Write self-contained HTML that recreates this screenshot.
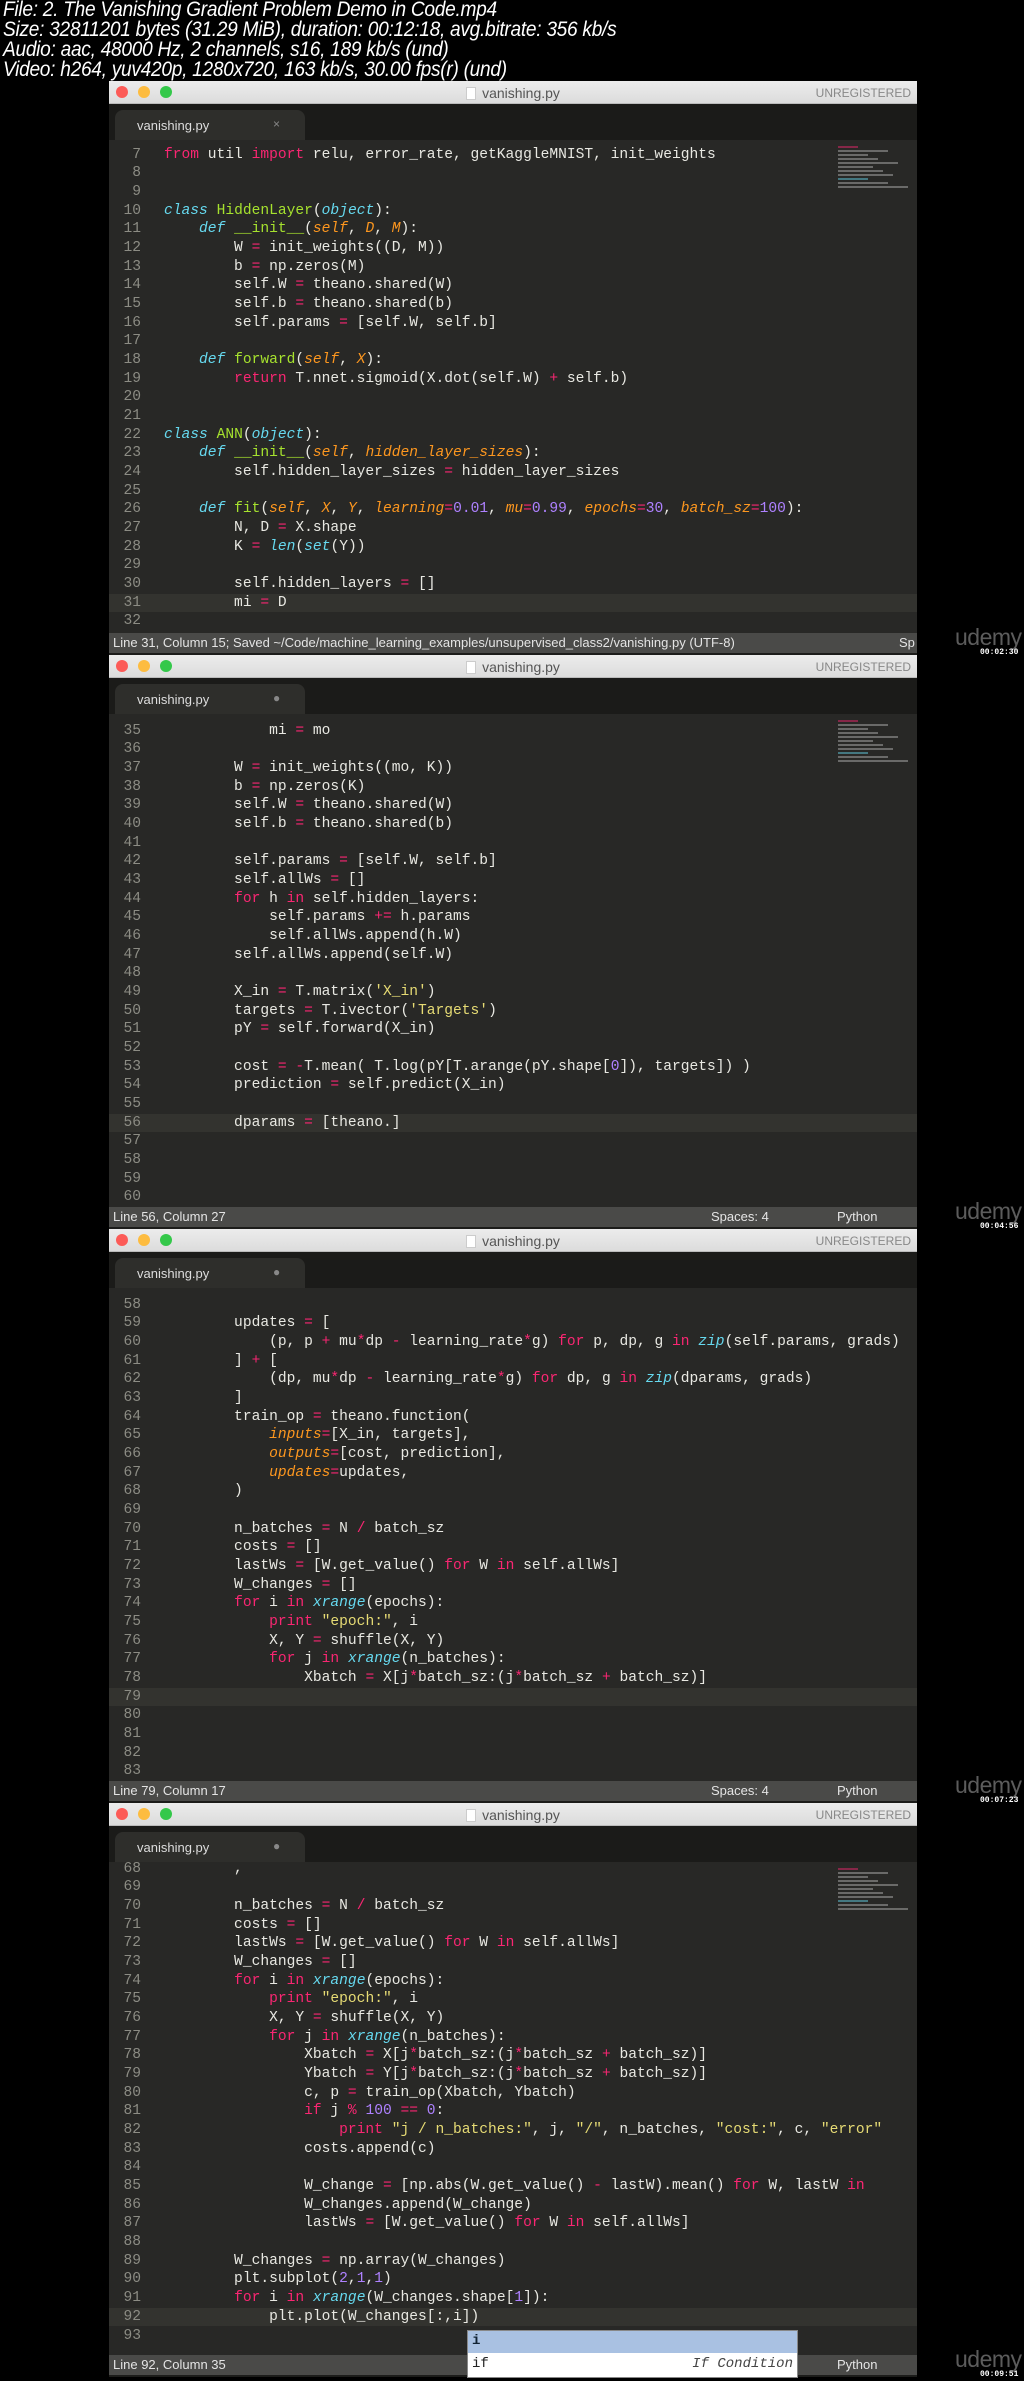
<!DOCTYPE html>
<html><head><meta charset="utf-8">
<style>
*{margin:0;padding:0;box-sizing:border-box}
body{width:1024px;height:2381px;background:#000;position:relative;overflow:hidden;font-family:"Liberation Sans",sans-serif}
.hdr{position:absolute;left:3px;top:0;color:#fff;font-family:"Liberation Sans Narrow","Liberation Sans",sans-serif;font-style:italic;font-size:21px;line-height:20px;letter-spacing:-0.3px;transform:scaleX(0.91);transform-origin:0 0;white-space:nowrap}
.win{position:absolute;left:109px;width:808px;height:574px;overflow:hidden;background:#1c1c1a}
.tb{position:absolute;left:0;top:0;width:808px;height:23px;background:linear-gradient(#ececec,#dcdcdc);border-bottom:1px solid #bbb}
.dot{position:absolute;top:5px;width:12px;height:12px;border-radius:50%}
.r{left:7px;background:#fc5b57}.y{left:29px;background:#fdbc40}.g{left:51px;background:#34c84a}
.ttl{position:absolute;left:0;width:808px;top:4px;text-align:center;font-size:14px;color:#555}
.ttl i{display:inline-block;width:10px;height:13px;background:#fff;border:1px solid #ccc;margin-right:6px;vertical-align:-2px}
.unreg{position:absolute;right:6px;top:5px;font-size:12px;color:#888}
.tabs{position:absolute;top:23px;left:0;width:808px;height:36px;background:#1b1b19}
.tab{position:absolute;left:6px;top:6px;width:190px;height:30px;background:#2e2e2b;border-radius:8px 8px 0 0;color:#ddd;font-size:13px;padding:8px 0 0 22px}
.tab span{position:absolute;left:158px;top:7px;color:#888;font-size:12px}
.ed{position:absolute;top:59px;left:0;width:808px;height:493px;background:#282826;overflow:hidden}
.hl{position:absolute;left:0;width:808px;height:18.67px;background:#33332f}
.gut{position:absolute;left:0;width:32px;text-align:right;color:#8c8c84;font-family:"Liberation Mono",monospace;font-size:14.6px;line-height:18.67px;white-space:pre}
.code{position:absolute;left:55px;color:#e8e8e2;font-family:"Liberation Mono",monospace;font-size:14.6px;line-height:18.67px;white-space:pre}
.mm{position:absolute;left:729px;top:6px;width:77px;height:150px;opacity:.45}
.mm div{height:2px;margin-bottom:2px;background:#bbb}
.st{position:absolute;top:552px;left:0;width:808px;height:20px;background:#4a4a48;color:#e4e4e4;font-size:13px;line-height:20px;padding-left:4px}
.st .a{position:absolute;left:602px}.st .b{position:absolute;left:728px}
.k{color:#f92672}.d{color:#66d9ef;font-style:italic}.f{color:#a6e22e}.p{color:#fd971f;font-style:italic}.n{color:#ae81ff}.s{color:#e6db74}
.ud{position:absolute;left:955px;color:#5c5c5c;font-size:23px;letter-spacing:-0.5px}
.ts{position:absolute;left:980px;color:#fff;font-size:8px;font-weight:bold;font-family:"Liberation Mono",monospace}
.pop{position:absolute;left:467px;top:2330px;width:331px;height:48px;background:#fff;border:1px solid #888;font-family:"Liberation Mono",monospace;font-size:14px}
.pop .r1{height:22px;background:#a9c1e2;padding:2px 4px;font-weight:bold;color:#123}
.pop .r2{height:24px;padding:3px 4px;color:#222}
.pop .r2 em{float:right;color:#444}
</style></head><body>
<div class="hdr">File: 2. The Vanishing Gradient Problem Demo in Code.mp4<br>Size: 32811201 bytes (31.29 MiB), duration: 00:12:18, avg.bitrate: 356 kb/s<br>Audio: aac, 48000 Hz, 2 channels, s16, 189 kb/s (und)<br>Video: h264, yuv420p, 1280x720, 163 kb/s, 30.00 fps(r) (und)</div>

<!-- Frame 1 -->
<div class="win" style="top:81px">
<div class="tb"><div class="dot r"></div><div class="dot y"></div><div class="dot g"></div><div class="ttl"><i></i>vanishing.py</div><div class="unreg">UNREGISTERED</div></div>
<div class="tabs"><div class="tab">vanishing.py<span>×</span></div></div>
<div class="ed">
<div class="hl" style="top:453.7px"></div>
<div class="mm"><div style="width:20px;background:#f92672"></div><div style="width:50px"></div><div style="width:30px"></div><div style="width:40px"></div><div style="width:60px"></div><div style="width:35px"></div><div style="width:45px"></div><div style="width:55px"></div><div style="width:30px;background:#66d9ef"></div><div style="width:50px"></div><div style="width:70px"></div></div>
<div class="gut" style="top:5.7px">7
8
9
10
11
12
13
14
15
16
17
18
19
20
21
22
23
24
25
26
27
28
29
30
31
32</div>
<div class="code" style="top:5.7px"><span class="k">from</span> util <span class="k">import</span> relu, error_rate, getKaggleMNIST, init_weights


<span class="d">class</span> <span class="f">HiddenLayer</span>(<span class="d">object</span>):
    <span class="d">def</span> <span class="f">__init__</span>(<span class="p">self</span>, <span class="p">D</span>, <span class="p">M</span>):
        W <span class="k">=</span> init_weights((D, M))
        b <span class="k">=</span> np.zeros(M)
        self.W <span class="k">=</span> theano.shared(W)
        self.b <span class="k">=</span> theano.shared(b)
        self.params <span class="k">=</span> [self.W, self.b]

    <span class="d">def</span> <span class="f">forward</span>(<span class="p">self</span>, <span class="p">X</span>):
        <span class="k">return</span> T.nnet.sigmoid(X.dot(self.W) <span class="k">+</span> self.b)


<span class="d">class</span> <span class="f">ANN</span>(<span class="d">object</span>):
    <span class="d">def</span> <span class="f">__init__</span>(<span class="p">self</span>, <span class="p">hidden_layer_sizes</span>):
        self.hidden_layer_sizes <span class="k">=</span> hidden_layer_sizes

    <span class="d">def</span> <span class="f">fit</span>(<span class="p">self</span>, <span class="p">X</span>, <span class="p">Y</span>, <span class="p">learning</span><span class="k">=</span><span class="n">0.01</span>, <span class="p">mu</span><span class="k">=</span><span class="n">0.99</span>, <span class="p">epochs</span><span class="k">=</span><span class="n">30</span>, <span class="p">batch_sz</span><span class="k">=</span><span class="n">100</span>):
        N, D <span class="k">=</span> X.shape
        K <span class="k">=</span> <span class="d">len</span>(<span class="d">set</span>(Y))

        self.hidden_layers <span class="k">=</span> []
        mi <span class="k">=</span> D
</div></div>
<div class="st">Line 31, Column 15; Saved ~/Code/machine_learning_examples/unsupervised_class2/vanishing.py (UTF-8)<span style="position:absolute;left:790px">Sp</span></div>
</div>
<div class="ud" style="top:624px">udemy</div><div class="ts" style="top:648px">00:02:30</div>

<!-- Frame 2 -->
<div class="win" style="top:655px">
<div class="tb"><div class="dot r"></div><div class="dot y"></div><div class="dot g"></div><div class="ttl"><i></i>vanishing.py</div><div class="unreg">UNREGISTERED</div></div>
<div class="tabs"><div class="tab">vanishing.py<span>●</span></div></div>
<div class="ed">
<div class="hl" style="top:399.8px"></div>
<div class="mm"><div style="width:20px;background:#f92672"></div><div style="width:50px"></div><div style="width:30px"></div><div style="width:40px"></div><div style="width:60px"></div><div style="width:35px"></div><div style="width:45px"></div><div style="width:55px"></div><div style="width:30px;background:#66d9ef"></div><div style="width:50px"></div><div style="width:70px"></div></div>
<div class="gut" style="top:7.7px">35
36
37
38
39
40
41
42
43
44
45
46
47
48
49
50
51
52
53
54
55
56
57
58
59
60</div>
<div class="code" style="top:7.7px">            mi <span class="k">=</span> mo

        W <span class="k">=</span> init_weights((mo, K))
        b <span class="k">=</span> np.zeros(K)
        self.W <span class="k">=</span> theano.shared(W)
        self.b <span class="k">=</span> theano.shared(b)

        self.params <span class="k">=</span> [self.W, self.b]
        self.allWs <span class="k">=</span> []
        <span class="k">for</span> h <span class="k">in</span> self.hidden_layers:
            self.params <span class="k">+=</span> h.params
            self.allWs.append(h.W)
        self.allWs.append(self.W)

        X_in <span class="k">=</span> T.matrix(<span class="s">'X_in'</span>)
        targets <span class="k">=</span> T.ivector(<span class="s">'Targets'</span>)
        pY <span class="k">=</span> self.forward(X_in)

        cost <span class="k">=</span> <span class="k">-</span>T.mean( T.log(pY[T.arange(pY.shape[<span class="n">0</span>]), targets]) )
        prediction <span class="k">=</span> self.predict(X_in)

        dparams <span class="k">=</span> [theano.]
</div></div>
<div class="st">Line 56, Column 27<span class="a">Spaces: 4</span><span class="b">Python</span></div>
</div>
<div class="ud" style="top:1198px">udemy</div><div class="ts" style="top:1222px">00:04:56</div>

<!-- Frame 3 -->
<div class="win" style="top:1229px">
<div class="tb"><div class="dot r"></div><div class="dot y"></div><div class="dot g"></div><div class="ttl"><i></i>vanishing.py</div><div class="unreg">UNREGISTERED</div></div>
<div class="tabs"><div class="tab">vanishing.py<span>●</span></div></div>
<div class="ed">
<div class="hl" style="top:399.8px"></div>
<div class="gut" style="top:7.7px">58
59
60
61
62
63
64
65
66
67
68
69
70
71
72
73
74
75
76
77
78
79
80
81
82
83</div>
<div class="code" style="top:7.7px">
        updates <span class="k">=</span> [
            (p, p <span class="k">+</span> mu<span class="k">*</span>dp <span class="k">-</span> learning_rate<span class="k">*</span>g) <span class="k">for</span> p, dp, g <span class="k">in</span> <span class="d">zip</span>(self.params, grads)
        ] <span class="k">+</span> [
            (dp, mu<span class="k">*</span>dp <span class="k">-</span> learning_rate<span class="k">*</span>g) <span class="k">for</span> dp, g <span class="k">in</span> <span class="d">zip</span>(dparams, grads)
        ]
        train_op <span class="k">=</span> theano.function(
            <span class="p">inputs</span><span class="k">=</span>[X_in, targets],
            <span class="p">outputs</span><span class="k">=</span>[cost, prediction],
            <span class="p">updates</span><span class="k">=</span>updates,
        )

        n_batches <span class="k">=</span> N <span class="k">/</span> batch_sz
        costs <span class="k">=</span> []
        lastWs <span class="k">=</span> [W.get_value() <span class="k">for</span> W <span class="k">in</span> self.allWs]
        W_changes <span class="k">=</span> []
        <span class="k">for</span> i <span class="k">in</span> <span class="d">xrange</span>(epochs):
            <span class="k">print</span> <span class="s">"epoch:"</span>, i
            X, Y <span class="k">=</span> shuffle(X, Y)
            <span class="k">for</span> j <span class="k">in</span> <span class="d">xrange</span>(n_batches):
                Xbatch <span class="k">=</span> X[j<span class="k">*</span>batch_sz:(j<span class="k">*</span>batch_sz <span class="k">+</span> batch_sz)]
</div></div>
<div class="st">Line 79, Column 17<span class="a">Spaces: 4</span><span class="b">Python</span></div>
</div>
<div class="ud" style="top:1772px">udemy</div><div class="ts" style="top:1796px">00:07:23</div>

<!-- Frame 4 -->
<div class="win" style="top:1803px">
<div class="tb"><div class="dot r"></div><div class="dot y"></div><div class="dot g"></div><div class="ttl"><i></i>vanishing.py</div><div class="unreg">UNREGISTERED</div></div>
<div class="tabs"><div class="tab">vanishing.py<span>●</span></div></div>
<div class="ed">
<div class="hl" style="top:445.8px"></div>
<div class="mm"><div style="width:20px;background:#f92672"></div><div style="width:50px"></div><div style="width:30px"></div><div style="width:40px"></div><div style="width:60px"></div><div style="width:35px"></div><div style="width:45px"></div><div style="width:55px"></div><div style="width:30px;background:#66d9ef"></div><div style="width:50px"></div><div style="width:70px"></div></div>
<div class="gut" style="top:-2.3px">68
69
70
71
72
73
74
75
76
77
78
79
80
81
82
83
84
85
86
87
88
89
90
91
92
93</div>
<div class="code" style="top:-2.3px">        ,

        n_batches <span class="k">=</span> N <span class="k">/</span> batch_sz
        costs <span class="k">=</span> []
        lastWs <span class="k">=</span> [W.get_value() <span class="k">for</span> W <span class="k">in</span> self.allWs]
        W_changes <span class="k">=</span> []
        <span class="k">for</span> i <span class="k">in</span> <span class="d">xrange</span>(epochs):
            <span class="k">print</span> <span class="s">"epoch:"</span>, i
            X, Y <span class="k">=</span> shuffle(X, Y)
            <span class="k">for</span> j <span class="k">in</span> <span class="d">xrange</span>(n_batches):
                Xbatch <span class="k">=</span> X[j<span class="k">*</span>batch_sz:(j<span class="k">*</span>batch_sz <span class="k">+</span> batch_sz)]
                Ybatch <span class="k">=</span> Y[j<span class="k">*</span>batch_sz:(j<span class="k">*</span>batch_sz <span class="k">+</span> batch_sz)]
                c, p <span class="k">=</span> train_op(Xbatch, Ybatch)
                <span class="k">if</span> j <span class="k">%</span> <span class="n">100</span> <span class="k">==</span> <span class="n">0</span>:
                    <span class="k">print</span> <span class="s">"j / n_batches:"</span>, j, <span class="s">"/"</span>, n_batches, <span class="s">"cost:"</span>, c, <span class="s">"error"</span>
                costs.append(c)

                W_change <span class="k">=</span> [np.abs(W.get_value() <span class="k">-</span> lastW).mean() <span class="k">for</span> W, lastW <span class="k">in</span>
                W_changes.append(W_change)
                lastWs <span class="k">=</span> [W.get_value() <span class="k">for</span> W <span class="k">in</span> self.allWs]

        W_changes <span class="k">=</span> np.array(W_changes)
        plt.subplot(<span class="n">2</span>,<span class="n">1</span>,<span class="n">1</span>)
        <span class="k">for</span> i <span class="k">in</span> <span class="d">xrange</span>(W_changes.shape[<span class="n">1</span>]):
            plt.plot(W_changes[:,i])
</div></div>
<div class="st">Line 92, Column 35<span class="a">Spaces: 4</span><span class="b">Python</span></div>
</div>
<div class="pop"><div class="r1">i</div><div class="r2">if<em>If Condition</em></div></div>
<div class="ud" style="top:2346px">udemy</div><div class="ts" style="top:2370px">00:09:51</div>
</body></html>
